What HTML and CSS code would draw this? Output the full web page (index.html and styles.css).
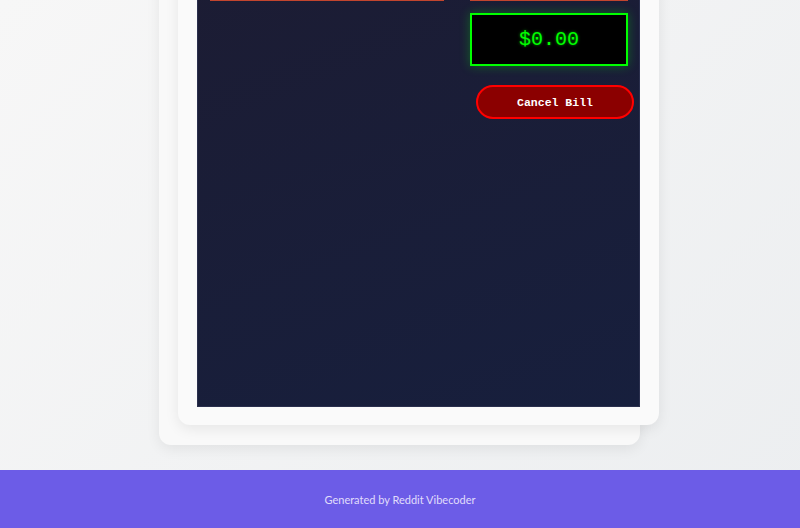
FILE: index.html
```html
<!DOCTYPE html>
<html lang="en">
<head>
<meta charset="utf-8">
<title>Register</title>
<link rel="stylesheet" href="styles.css">
</head>
<body>
<main class="page">
  <div class="stack">
    <div class="card">
      <div class="panel">
        <div class="col-left">
          <div class="field"></div>
        </div>
        <div class="col-right">
          <div class="field"></div>
          <div class="display">$0.00</div>
          <button class="cancel">Cancel Bill</button>
        </div>
      </div>
    </div>
  </div>
</main>
<footer class="footer">Generated by Reddit Vibecoder</footer>
</body>
</html>
```
FILE: styles.css
```css
html, body {
  margin: 0;
  padding: 0;
}
body {
  background: linear-gradient(135deg, #f7f7f7 0%, #eceef0 100%);
  font-family: "Lato", "Noto Sans", sans-serif;
  height: 528px;
  overflow: hidden;
}
.page {
  height: 470px;
  box-sizing: border-box;
  padding-bottom: 25px;
  display: flex;
  justify-content: center;
  align-items: flex-end;
  overflow: hidden;
}
.stack {
  position: relative;
  width: 481px;
  margin-left: -1px;
  flex-shrink: 0;
}
.stack::before {
  content: "";
  position: absolute;
  inset: 0;
  background: #f9f9f9;
  border-radius: 12px;
  box-shadow: 0 4px 14px rgba(0, 0, 0, 0.07);
}
.card {
  position: relative;
  transform: translate(19px, -20px);
  background: #fafafa;
  border-radius: 12px;
  padding: 19px 19px 18px 19px;
  box-shadow: 0 4px 14px rgba(0, 0, 0, 0.08);
}
.panel {
  height: 459px;
  box-sizing: border-box;
  padding: 12px 12px 0 12px;
  background: linear-gradient(160deg, #1c1c33 0%, #171f3d 100%);
  border: 1px solid #2a2f4d;
  display: grid;
  grid-template-columns: 234px 158px;
  column-gap: 26px;
  align-items: start;
}
.field {
  height: 40px;
  box-sizing: border-box;
  border-bottom: 1px solid #c2452e;
}
.col-right {
  display: flex;
  flex-direction: column;
}
.display {
  margin-top: 12px;
  height: 53px;
  box-sizing: border-box;
  background: #000;
  border: 2px solid #00ff00;
  box-shadow: 0 0 10px rgba(0, 255, 0, 0.3);
  color: #00ff00;
  font-family: "Liberation Mono", "Courier New", monospace;
  font-size: 20px;
  text-shadow: 0 0 3px rgba(0, 255, 0, 0.6);
  display: flex;
  align-items: center;
  justify-content: center;
}
.cancel {
  margin-top: 19px;
  margin-left: 6px;
  width: 158px;
  height: 34px;
  box-sizing: border-box;
  background: #8b0000;
  border: 2px solid #ff0000;
  border-radius: 17px;
  color: #fff;
  font-family: "Liberation Mono", "Courier New", monospace;
  font-weight: bold;
  font-size: 11.5px;
  cursor: pointer;
}
.footer {
  height: 58px;
  background: #6c5ce7;
  color: #e0dcfb;
  font-size: 11px;
  display: flex;
  align-items: center;
  justify-content: center;
}
```
